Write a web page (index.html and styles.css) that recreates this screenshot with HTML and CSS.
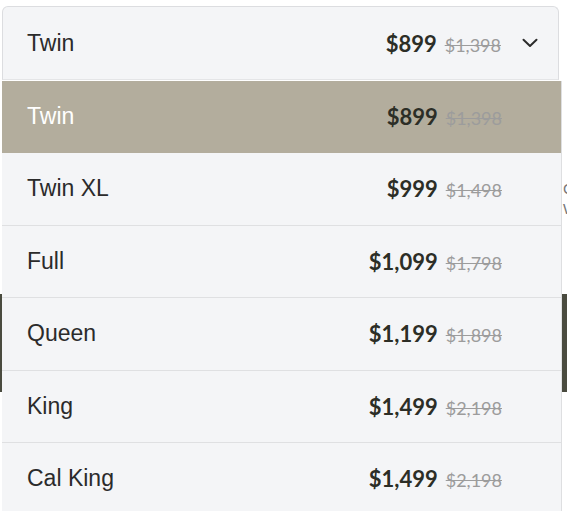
FILE: index.html
```html
<!DOCTYPE html>
<html>
<head>
<meta charset="utf-8">
<link rel="stylesheet" href="styles.css">
</head>
<body>
<div class="page">
  <div class="select">
    <span class="name">Twin</span>
    <span class="prices"><span class="now">$899</span><span class="was">$1,398</span></span>
    <svg class="chev" width="16" height="10" viewBox="0 0 16 10"><path d="M1.5 1.8 L8 8 L14.5 1.8" fill="none" stroke="#2b2b2b" stroke-width="2" stroke-linecap="round" stroke-linejoin="round"/></svg>
  </div>
  <div class="behind">
    <div class="copy">
      <p>Comfort layers</p>
      <p>Wrapped coils</p>
    </div>
    <div class="banner"></div>
  </div>
  <ul class="menu">
    <li class="option active"><span class="name">Twin</span><span class="prices"><span class="now">$899</span><span class="was">$1,398</span></span></li>
    <li class="option"><span class="name">Twin XL</span><span class="prices"><span class="now">$999</span><span class="was">$1,498</span></span></li>
    <li class="option"><span class="name">Full</span><span class="prices"><span class="now">$1,099</span><span class="was">$1,798</span></span></li>
    <li class="option"><span class="name">Queen</span><span class="prices"><span class="now">$1,199</span><span class="was">$1,898</span></span></li>
    <li class="option"><span class="name">King</span><span class="prices"><span class="now">$1,499</span><span class="was">$2,198</span></span></li>
    <li class="option"><span class="name">Cal King</span><span class="prices"><span class="now">$1,499</span><span class="was">$2,198</span></span></li>
  </ul>
</div>
</body>
</html>
```

FILE: styles.css
```css
html, body {
  margin: 0;
  padding: 0;
  background: #ffffff;
  overflow: hidden;
}
.page {
  position: relative;
  width: 567px;
  height: 511px;
  padding-top: 6px;
  box-sizing: border-box;
  font-family: "Liberation Sans", Arial, sans-serif;
}
.select {
  margin-left: 2px;
  width: 557px;
  height: 74px;
  box-sizing: border-box;
  border: 1px solid #dcdde0;
  border-bottom-color: #e4e5e7;
  border-radius: 6px 6px 0 0;
  background: #f4f5f7;
  display: flex;
  align-items: center;
  padding: 0 20px 0 24px;
}
.name {
  flex: 1;
  font-size: 23px;
  color: #2b2b2b;
}
.prices {
  display: flex;
  align-items: baseline;
  gap: 8px;
  font-family: "Lato", sans-serif;
}
.now {
  font-size: 22px;
  font-weight: 700;
  color: #2c2e26;
}
.was {
  font-size: 18px;
  color: #9c9c9c;
  text-decoration: line-through;
}
.chev {
  margin-left: 21px;
  display: block;
}
.behind {
  padding-top: 100px;
}
.copy {
  display: flex;
  flex-direction: column;
  gap: 2px;
  padding-left: 563px;
  font-size: 15px;
  color: #777;
  white-space: nowrap;
}
.copy p {
  margin: 0;
  line-height: 18px;
}
.banner {
  margin-top: 76px;
  height: 98px;
  background: #4a4b3f;
}
.menu {
  position: absolute;
  top: 80.5px;
  left: 2px;
  width: 560px;
  margin: 0;
  padding: 0;
  list-style: none;
  background: #f4f5f7;
  border-right: 1px solid #dedfe1;
  box-sizing: border-box;
}
.option {
  height: 72.5px;
  box-sizing: border-box;
  display: flex;
  align-items: center;
  padding: 0 59px 0 25px;
  border-bottom: 1px solid #dfe0e2;
  background: #f4f5f7;
}
.option.active {
  background: #b3ad9d;
  border-bottom-color: #b3ad9d;
}
.option.active .name {
  color: #ffffff;
}
```
